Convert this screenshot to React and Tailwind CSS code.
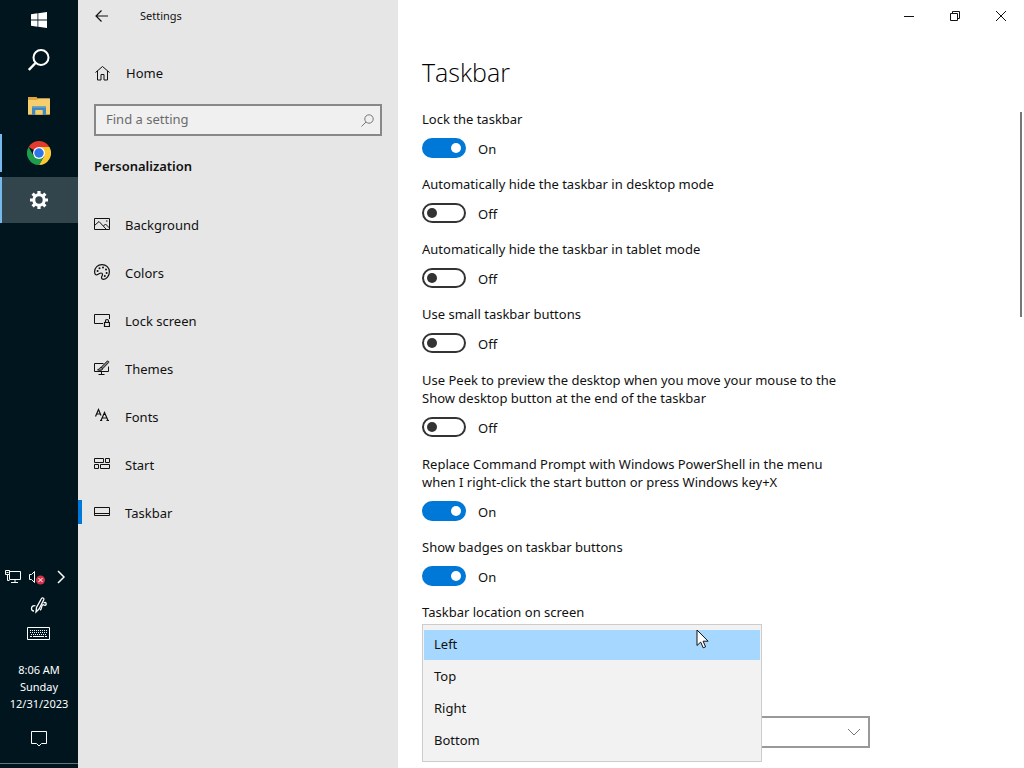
import { useState } from 'react';

const navItems = [
  { label: 'Background', icon: BackgroundIcon },
  { label: 'Colors', icon: ColorsIcon },
  { label: 'Lock screen', icon: LockScreenIcon },
  { label: 'Themes', icon: ThemesIcon },
  { label: 'Fonts', icon: FontsIcon },
  { label: 'Start', icon: StartIcon },
  { label: 'Taskbar', icon: TaskbarIcon },
];

const settings = [
  { id: 'lock', lines: ['Lock the taskbar'], on: true },
  { id: 'hide-desktop', lines: ['Automatically hide the taskbar in desktop mode'], on: false },
  { id: 'hide-tablet', lines: ['Automatically hide the taskbar in tablet mode'], on: false },
  { id: 'small', lines: ['Use small taskbar buttons'], on: false },
  {
    id: 'peek',
    lines: ['Use Peek to preview the desktop when you move your mouse to the', 'Show desktop button at the end of the taskbar'],
    on: false,
  },
  {
    id: 'powershell',
    lines: ['Replace Command Prompt with Windows PowerShell in the menu', 'when I right-click the start button or press Windows key+X'],
    on: true,
  },
  { id: 'badges', lines: ['Show badges on taskbar buttons'], on: true },
];

const locations = ['Left', 'Top', 'Right', 'Bottom'];

/* Sidebar icons */
function LineIcon({ children }) {
  return (
    <svg width="16" height="16" viewBox="0 0 16 16" fill="none" stroke="#111" strokeWidth="1" className="shrink-0" aria-hidden="true">
      {children}
    </svg>
  );
}

function BackgroundIcon() {
  return (
    <LineIcon>
      <path d="M.5 2.500h15v11H.5zM.5 9.500l4.500-4 7.500 8M9.500 10l2-2 4 4" />
      <path d="M12 5h1.500" />
    </LineIcon>
  );
}

function ColorsIcon() {
  return (
    <LineIcon>
      <path strokeWidth="1.200" d="M8 .6c4.200 0 7.400 3 7.400 7.100 0 4.300-3 7.700-5.900 7.700-1.300 0-2-.8-2-1.900 0-1.300 1-1.800 1-3 0-.9-.6-1.500-1.500-1.500-1.500 0-2.500 1.800-4.200 1.800C1.300 10.800.6 9.600.6 7.700.6 3.600 3.800.6 8 .6z" />
      <g fill="#111" stroke="none">
        <circle cx="3.600" cy="7" r="1" />
        <circle cx="5.500" cy="4.200" r="1" />
        <circle cx="9" cy="3.500" r="1" />
        <circle cx="12" cy="5.500" r="1" />
        <circle cx="12.600" cy="9" r="1" />
        <circle cx="10.800" cy="12" r="1" />
      </g>
    </LineIcon>
  );
}

function LockScreenIcon() {
  return (
    <LineIcon>
      <path d="M9 11.500H.5v-9h15V7" />
      <path strokeWidth="1.200" d="M10.500 10.500h5v4h-5zM11.500 10.500V9a1.500 1.500 0 0 1 3 0v1.500" />
    </LineIcon>
  );
}

function ThemesIcon() {
  return (
    <LineIcon>
      <path d="M9.500 3.500h-9v8h14v-5M7.500 11.500v3M4.500 14.500h6" />
      <path d="M14.300 1.200c.7.500.6 1 .1 1.600L8.800 8.600 7.200 7.200 13 1.400c.4-.4.900-.5 1.300-.2zM7.200 7.200c-1.700.1-1.700 2.300-3.700 2.600 2 1 5.200.7 5.300-1.200" fill="#888" />
    </LineIcon>
  );
}

function FontsIcon() {
  return (
    <LineIcon>
      <path d="M1.500 8.500 4.500 1.500l2.500 6M2.500 6h4" strokeWidth="1.200" />
      <path d="M7 12.500l3.500-8 3.500 8M8.200 10h4.600M6 12.500h2.200M12.500 12.500h2.500" strokeWidth="1.200" />
    </LineIcon>
  );
}

function StartIcon() {
  return (
    <LineIcon>
      <path d="M.5 2.500h9v4h-9zM11.500 2.500h4v4h-4zM.5 8.500h4v4h-4zM6.500 8.500h9v4h-9z" />
    </LineIcon>
  );
}

function TaskbarIcon() {
  return (
    <LineIcon>
      <path d="M.5 3.500h15v8H.5zM.5 9.500h15" />
    </LineIcon>
  );
}

/* Desktop taskbar icons */
function WindowsLogo() {
  return (
    <svg width="16" height="16" viewBox="0 0 16 16" fill="#fff" aria-hidden="true">
      <path d="M0 2.200 6.500 1.300v6.200H0zM7.300 1.200 16 0v7.500H7.300zM0 8.400h6.500v6.300L0 13.800zM7.300 8.400H16V16l-8.700-1.200z" />
    </svg>
  );
}

function SearchGlass() {
  return (
    <svg width="22" height="22" viewBox="0 0 22 22" fill="none" stroke="#fff" strokeWidth="2" aria-hidden="true">
      <circle cx="13" cy="8.500" r="7.500" />
      <path d="M7.500 14 .8 21" strokeWidth="2.500" />
    </svg>
  );
}

function FolderIcon() {
  return (
    <svg width="22" height="18" viewBox="0 0 22 18" aria-hidden="true">
      <path d="M0 0h8.500l1.500 1.500h11.500V17.500H0z" fill="#e0a63c" />
      <path d="M0 3h9l1.500-1.500H22v16H0z" fill="#f5ce6e" />
      <path d="M4 17.800V9.500h14v8.300h-3.500V13h-7v4.800z" fill="#4088bd" />
      <path d="M7.500 17.500V13.500h7v4z" fill="#f5ce6e" />
      <path d="M4 9.500h14v1.500H4z" fill="#5a9cc8" />
    </svg>
  );
}

function ChromeIcon() {
  return (
    <svg width="24" height="24" viewBox="0 0 48 48" aria-hidden="true">
      <path d="M24 24 3.200 12A24 24 0 0 1 44.800 12z" fill="#e33b2e" />
      <path d="M24 12h20.800A24 24 0 0 1 24 48l10.400-18z" fill="#fcc934" />
      <path d="M3.200 12A24 24 0 0 0 24 48l10.400-18H13.600z" fill="#1e9e4a" />
      <circle cx="24" cy="24" r="12" fill="#fff" />
      <circle cx="24" cy="24" r="9.500" fill="#2f74e8" />
    </svg>
  );
}

function GearIcon() {
  return (
    <svg width="18" height="18" viewBox="0 0 18 18" fill="none" stroke="#fff" aria-hidden="true">
      <circle cx="9" cy="9" r="5.200" strokeWidth="3" />
      <path d="M9 0v3.500M9 14.500V18M0 9h3.500M14.500 9H18M2.600 2.600l2.500 2.500M12.900 12.900l2.500 2.500M15.400 2.600l-2.500 2.500M5.100 12.900l-2.500 2.500" strokeWidth="3.200" />
    </svg>
  );
}

function DesktopTaskbar() {
  return (
    <aside className="flex w-[78px] shrink-0 flex-col bg-[#00151e] text-white">
      <button type="button" aria-label="Start" className="flex h-9 items-center justify-center pt-1">
        <WindowsLogo />
      </button>
      <button type="button" aria-label="Search" className="flex h-12 items-center justify-center">
        <SearchGlass />
      </button>
      <button type="button" aria-label="File Explorer" className="flex h-11 items-center justify-center">
        <FolderIcon />
      </button>
      <div className="flex h-[49px] items-center">
        <span className="h-[38px] w-0.5 shrink-0 bg-[#76b9ed]" />
        <button type="button" aria-label="Google Chrome" className="flex h-full flex-1 items-center justify-center pr-0.5">
          <ChromeIcon />
        </button>
      </div>
      <div className="flex h-[46px] bg-[#32454d]">
        <span className="w-0.5 shrink-0 bg-[#76b9ed]" />
        <button type="button" aria-label="Settings" className="flex h-full flex-1 items-center justify-center pr-0.5">
          <GearIcon />
        </button>
      </div>

      {/* Tray */}
      <div className="mt-auto flex flex-col items-center pb-1">
        <div className="flex h-[26px] w-full items-center gap-2 pl-[5px]">
          <button type="button" aria-label="Network">
            <svg width="16" height="14" viewBox="0 0 16 14" fill="none" stroke="#fff" aria-hidden="true">
              <path d="M5 1.500h10.500v8H4.500v-5M10 9.500v3M6 12.500h7M.5.500h4v4h-4zM2.500 4.500v6h2M1.500 2.500h2" />
            </svg>
          </button>
          <button type="button" aria-label="Volume muted">
            <svg width="16" height="16" viewBox="0 0 16 16" fill="none" stroke="#fff" aria-hidden="true">
              <path d="M.5 5.500h2L5.500 2.500v11l-3-3h-2z" />
              <circle cx="11.500" cy="11" r="4.500" fill="#d13448" stroke="none" />
              <path d="m9.500 9 4 4m0-4-4 4" />
            </svg>
          </button>
          <button type="button" aria-label="Show hidden icons" className="pl-1">
            <svg width="8" height="14" viewBox="0 0 8 14" fill="none" stroke="#fff" strokeWidth="1.500" aria-hidden="true">
              <path d="m1 1 6 6-6 6" />
            </svg>
          </button>
        </div>
        <button type="button" aria-label="Windows Ink" className="flex h-[29px] items-center">
          <svg width="18" height="18" viewBox="0 0 18 18" fill="none" stroke="#fff" strokeWidth="1.300" aria-hidden="true">
            <path d="M5.500 10c-2.200-1-4 .5-4 2.500 0 1.500 1 2.500 2.500 2.500" />
            <path d="M6 16 6.500 11.500 11.500 2.500c.8-1.200 3-.5 2.300 1.200L9 13z" />
            <path d="M10 14c2-.5 1-3.500 2.500-5 1-.8 1.500.5 2.500.3 1 0 1.500-1 1-2.300-.5-.8-1.500-.5-2.500 0" />
          </svg>
        </button>
        <button type="button" aria-label="Touch keyboard" className="flex h-[30px] items-center">
          <svg width="24" height="14" viewBox="0 0 24 14" fill="none" stroke="#fff" aria-hidden="true">
            <path d="M.5.500h22v12H.5z" />
            <path d="M3 3.500h18M3 5.500h18M4 7.500h16" strokeDasharray="1 1" />
            <path d="M3 9.500h2M6 9.500h11M18 9.500h2" />
          </svg>
        </button>
        <p className="mt-3 text-center text-[11px] leading-[17px]">
          8:06 AM<br />Sunday<br />12/31/2023
        </p>
        <button type="button" aria-label="Notifications" className="mt-0.5 flex h-[49px] items-center">
          <svg width="16" height="16" viewBox="0 0 16 16" fill="none" stroke="#fff" aria-hidden="true">
            <path d="M.5.500h15v12h-5L8 15l-2.500-2.500h-5z" />
          </svg>
        </button>
        <div className="h-px w-full bg-[#62747c]" />
      </div>
    </aside>
  );
}

function Sidebar() {
  const [query, setQuery] = useState('');

  return (
    <div className="flex w-80 shrink-0 flex-col bg-[#e6e6e6]">
      <div className="flex h-8 items-center gap-[31px] pl-[17px]">
        <button type="button" aria-label="Back">
          <svg width="14" height="14" viewBox="0 0 14 14" fill="none" stroke="#111" strokeWidth="1.200" aria-hidden="true">
            <path d="M13 7H1M6.500 1.500 1 7l5.500 5.500" />
          </svg>
        </button>
        <span className="text-[11px]">Settings</span>
      </div>

      <a href="#home" className="mt-4 flex h-[50px] items-center gap-4 pl-4">
        <LineIcon>
          <path d="M1.500 7.500 8.500 1.500l7 6M3.500 6v9h3.500v-5.500h3V15h3.500V6" />
        </LineIcon>
        <span className="pt-0.5">Home</span>
      </a>

      <div className="mx-4 mt-1.5 flex h-8 items-center border-2 border-[#888] bg-[#f0f0f0] pr-1.5">
        <input
          type="text"
          aria-label="Find a setting"
          placeholder="Find a setting"
          value={query}
          onChange={(e) => setQuery(e.target.value)}
          className="min-w-0 flex-1 bg-transparent pl-2.5 outline-none placeholder:text-[#6b6b6b]"
        />
        <svg width="13" height="13" viewBox="0 0 13 13" fill="none" stroke="#777" aria-hidden="true">
          <circle cx="8" cy="5" r="4.200" />
          <path d="M5 8 .5 12.500" />
        </svg>
      </div>

      <h2 className="mt-5 pl-4 leading-5 font-semibold">Personalization</h2>

      <nav className="mt-6">
        {navItems.map(({ label, icon: Icon }) => (
          <a key={label} href={`#${label}`} className="flex h-12 items-center">
            <span className={`h-6 w-1 ${label === 'Taskbar' ? 'bg-[#0078d7]' : ''}`} />
            <span className="flex items-center gap-[15px] pl-3">
              <Icon />
              <span className="pt-[3px]">{label}</span>
            </span>
          </a>
        ))}
      </nav>
    </div>
  );
}

function WindowControls() {
  return (
    <div className="flex h-8 justify-end">
      <button type="button" aria-label="Minimize" className="flex w-[46px] items-center justify-center">
        <svg width="10" height="10" viewBox="0 0 10 10" stroke="#111" aria-hidden="true"><path d="M0 5.500h10" /></svg>
      </button>
      <button type="button" aria-label="Restore" className="flex w-[46px] items-center justify-center">
        <svg width="10" height="10" viewBox="0 0 10 10" fill="none" stroke="#111" aria-hidden="true">
          <path d="M.5 2.500h7v7h-7zM2.500 2.500v-2h7v7h-2" />
        </svg>
      </button>
      <button type="button" aria-label="Close" className="flex w-[46px] items-center justify-center">
        <svg width="10" height="10" viewBox="0 0 10 10" stroke="#111" aria-hidden="true"><path d="m0 0 10 10M10 0 0 10" /></svg>
      </button>
    </div>
  );
}

function Toggle({ id, lines, on }) {
  const [checked, setChecked] = useState(on);

  return (
    <div className={lines.length > 1 ? 'pt-px' : ''}>
      <label htmlFor={id} className="block leading-[18px]">
        {lines.map((line) => (
          <span key={line} className="block">{line}</span>
        ))}
      </label>
      <div className="mt-2.5 flex h-5 items-center gap-3">
        <input
          id={id}
          type="checkbox"
          checked={checked}
          onChange={() => setChecked(!checked)}
          className="flex h-5 w-11 appearance-none items-center rounded-full border-2 border-[#333] before:ml-[3px] before:size-2.5 before:rounded-full before:bg-[#333] checked:border-[#0078d7] checked:bg-[#0078d7] checked:before:ml-[27px] checked:before:bg-white"
        />
        <span className="pt-[3px]">{checked ? 'On' : 'Off'}</span>
      </div>
    </div>
  );
}

function LocationPicker() {
  const [location, setLocation] = useState('Left');

  return (
    <div>
      <p id="location-label" className="leading-[18px]">Taskbar location on screen</p>
      <div className="relative mt-[3px] h-[92px]">
        <div role="listbox" aria-labelledby="location-label" className="absolute top-0 left-0 z-10 w-[340px] border border-[#ccc] bg-[#f2f2f2] py-1">
          {locations.map((name) => (
            <button
              key={name}
              type="button"
              role="option"
              aria-selected={name === location}
              onClick={() => setLocation(name)}
              className={`block h-8 w-full border border-[#f2f2f2] px-2.5 text-left ${name === location ? 'bg-[#a6d8ff]' : ''}`}
            >
              {name}
            </button>
          ))}
        </div>
        {/* Mouse pointer */}
        <svg width="13" height="20" viewBox="0 0 13 20" className="absolute top-[5px] left-[274px] z-20" aria-hidden="true">
          <path d="M1 1v15.500l3.700-3.400 2.500 5.700 2.400-1-2.500-5.600h5z" fill="#fff" stroke="#111" />
        </svg>
      </div>
      <div className="grid w-full max-w-[448px] items-center">
        <select aria-label="Combine taskbar buttons" className="col-start-1 row-start-1 h-8 w-full appearance-none border-2 border-[#999] bg-white px-2.5">
          <option></option>
        </select>
        <svg width="14" height="14" viewBox="0 0 14 14" fill="none" stroke="#777" className="pointer-events-none col-start-1 row-start-1 mr-[9px] justify-self-end" aria-hidden="true">
          <path d="m1 4 6 6 6-6" />
        </svg>
      </div>
    </div>
  );
}

const App = () => {
  return (
    <div className="flex min-h-screen bg-white font-['Noto_Sans','Open_Sans',sans-serif] text-[13px] text-[#111]">
      <DesktopTaskbar />
      <Sidebar />
      <main className="flex min-w-0 flex-1 flex-col">
        <WindowControls />
        <div className="flex flex-1">
          <div className="flex-1 pt-[22px] pb-1.5 pl-6">
            <h1 className="font-['Open_Sans','Noto_Sans',sans-serif] text-[25px] leading-9 font-light text-black">Taskbar</h1>
            <div className="mt-5 flex flex-col gap-[17px]">
              {settings.map((item) => (
                <Toggle key={item.id} {...item} />
              ))}
              <LocationPicker />
            </div>
          </div>
          <div className="mt-20 mr-0.5 h-[205px] w-0.5 bg-[#777]" />
        </div>
      </main>
    </div>
  );
};

export default App;
